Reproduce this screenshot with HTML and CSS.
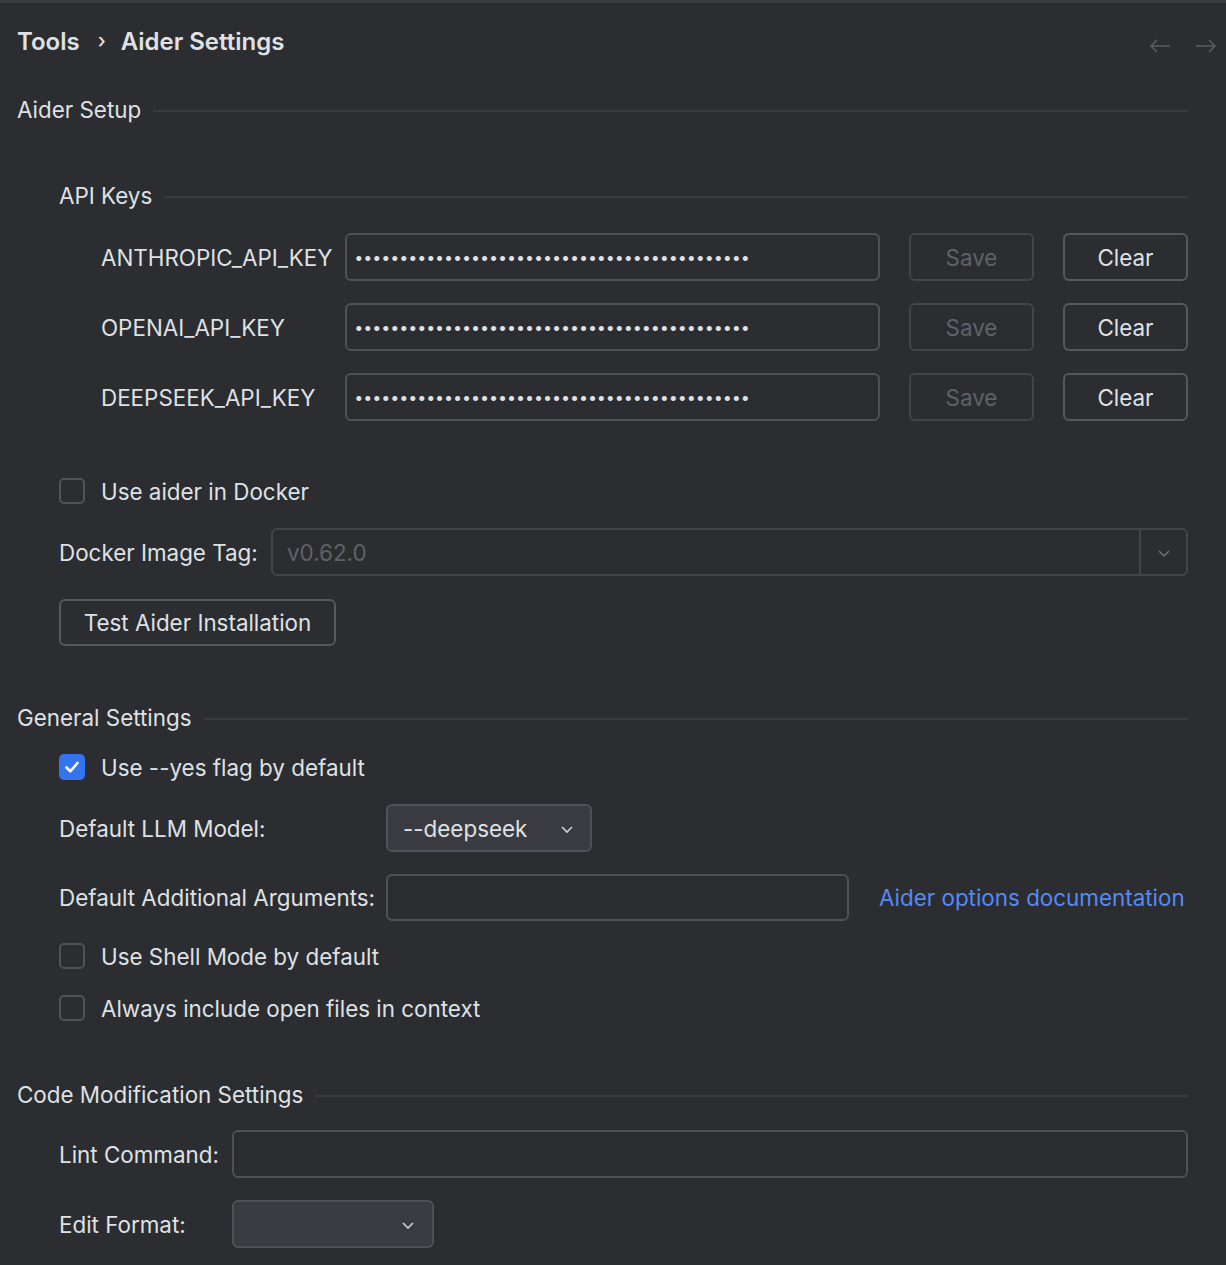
FILE: index.html
```html
<!DOCTYPE html>
<html>
<head>
<meta charset="utf-8">
<link rel="stylesheet" href="styles.css">
</head>
<body>
<div class="page">
  <div class="header">
    <div class="crumbs"><span>Tools</span><span class="sep">›</span><span>Aider Settings</span></div>
    <div class="nav">
      <svg width="24" height="16" viewBox="0 0 24 16"><path d="M22 8H3M9 2L3 8l6 6" fill="none" stroke="#595c62" stroke-width="1.6"/></svg>
      <svg width="24" height="16" viewBox="0 0 24 16"><path d="M2 8h19M15 2l6 6-6 6" fill="none" stroke="#595c62" stroke-width="1.6"/></svg>
    </div>
  </div>

  <div class="title t-setup"><span>Aider Setup</span><i class="rule"></i></div>

  <div class="indent">
    <div class="title t-keys"><span>API Keys</span><i class="rule"></i></div>

    <div class="keys">
      <div class="keyrow">
        <label class="keylabel">ANTHROPIC_API_KEY</label>
        <div class="field pw">••••••••••••••••••••••••••••••••••••••••••••</div>
        <button class="btn disabled">Save</button>
        <button class="btn">Clear</button>
      </div>
      <div class="keyrow">
        <label class="keylabel">OPENAI_API_KEY</label>
        <div class="field pw">••••••••••••••••••••••••••••••••••••••••••••</div>
        <button class="btn disabled">Save</button>
        <button class="btn">Clear</button>
      </div>
      <div class="keyrow">
        <label class="keylabel">DEEPSEEK_API_KEY</label>
        <div class="field pw">••••••••••••••••••••••••••••••••••••••••••••</div>
        <button class="btn disabled">Save</button>
        <button class="btn">Clear</button>
      </div>
    </div>

    <div class="check m-docker"><span class="box"></span><span>Use aider in Docker</span></div>

    <div class="row m-tag">
      <label class="lbl-tag">Docker Image Tag:</label>
      <div class="combo-disabled">
        <span class="ph">v0.62.0</span>
        <span class="arrowbox"><svg width="14" height="10" viewBox="0 0 14 10"><path d="M2 3l5 5 5-5" fill="none" stroke="#6f737a" stroke-width="1.5"/></svg></span>
      </div>
    </div>

    <button class="btn test">Test Aider Installation</button>
  </div>

  <div class="title t-general"><span>General Settings</span><i class="rule"></i></div>

  <div class="indent">
    <div class="check m-yes"><span class="box checked"><svg width="20" height="20" viewBox="0 0 20 20"><path d="M4.5 10.5l3.8 3.8L15.5 6" fill="none" stroke="#fff" stroke-width="2.6" stroke-linecap="round" stroke-linejoin="round"/></svg></span><span>Use --yes flag by default</span></div>

    <div class="row m-llm">
      <label class="lbl-wide">Default LLM Model:</label>
      <div class="combo llm"><span>--deepseek</span><svg width="14" height="10" viewBox="0 0 14 10"><path d="M2 3l5 5 5-5" fill="none" stroke="#ced0d6" stroke-width="1.6"/></svg></div>
    </div>

    <div class="row m-args">
      <label class="lbl-wide">Default Additional Arguments:</label>
      <div class="field args"></div>
      <a class="link">Aider options documentation</a>
    </div>

    <div class="check m-shell"><span class="box"></span><span>Use Shell Mode by default</span></div>
    <div class="check m-always"><span class="box"></span><span>Always include open files in context</span></div>
  </div>

  <div class="title t-code"><span>Code Modification Settings</span><i class="rule"></i></div>

  <div class="indent">
    <div class="row m-lint">
      <label class="lbl-lint">Lint Command:</label>
      <div class="field lint"></div>
    </div>
    <div class="row m-edit">
      <label class="lbl-lint">Edit Format:</label>
      <div class="combo edit"><span></span><svg width="14" height="10" viewBox="0 0 14 10"><path d="M2 3l5 5 5-5" fill="none" stroke="#ced0d6" stroke-width="1.6"/></svg></div>
    </div>
  </div>
</div>
</body>
</html>
```

FILE: styles.css
```css
html, body {
  margin: 0;
  padding: 0;
  background: #2b2d30;
}
body {
  font-family: Inter, "Noto Sans", sans-serif;
  font-size: 22.4px;
  color: #dfe1e5;
  width: 1226px;
  height: 1265px;
  overflow: hidden;
}
.page {
  border-top: 3px solid #3b3d41;
  padding: 0 38px 0 17px;
}
.header {
  height: 76px;
  display: flex;
  align-items: center;
  justify-content: space-between;
  margin-right: -30px;
}
.crumbs {
  display: flex;
  align-items: center;
  font-size: 24px;
  font-weight: 600;
  color: #dfe1e5;
}
.crumbs .sep {
  font-weight: 500;
  margin: 0 15px 0 18px;
  font-size: 20px;
}
.nav {
  display: flex;
  gap: 22px;
  padding-top: 10px;
}
.title {
  height: 30px;
  display: flex;
  align-items: center;
}
.title .rule {
  flex: 1;
  height: 0;
  border-top: 2px solid #393b40;
  margin-left: 12px;
  margin-top: 3px;
}
.t-setup { margin-top: 15px; }
.t-keys { margin-top: 56px; }
.t-general { margin-top: 56px; }
.t-code { margin-top: 56px; }
.indent { padding-left: 42px; }

.keys {
  margin-top: 23px;
  padding-left: 42px;
  display: flex;
  flex-direction: column;
  gap: 22px;
}
.keyrow {
  display: flex;
  align-items: center;
  height: 48px;
}
.keylabel { width: 244px; }
.field {
  box-sizing: border-box;
  height: 48px;
  border: 2px solid #4e5157;
  border-radius: 6px;
  background: #2b2d30;
}
.pw {
  width: 535px;
  padding-left: 8px;
  display: flex;
  align-items: center;
  font-size: 16px;
  font-weight: 700;
  letter-spacing: 1.4px;
  color: #dfe1e5;
  overflow: hidden;
  white-space: nowrap;
}
.btn {
  box-sizing: border-box;
  height: 48px;
  width: 125px;
  margin-left: 29px;
  border: 2px solid #55585e;
  border-radius: 6px;
  background: #2b2d30;
  color: #dfe1e5;
  font-family: Inter, "Noto Sans", sans-serif;
  font-size: 22.4px;
  padding: 0;
}
.btn.disabled {
  border-color: #43454a;
  color: #5f6268;
}
.check {
  height: 30px;
  display: flex;
  align-items: center;
  gap: 16px;
}
.box {
  box-sizing: border-box;
  width: 26px;
  height: 26px;
  border: 2px solid #50535a;
  border-radius: 5px;
  display: flex;
  align-items: center;
  justify-content: center;
}
.box.checked {
  background: #3574f0;
  border-color: #3574f0;
}
.m-docker { margin-top: 55px; }
.m-yes { margin-top: 20px; }
.m-shell { margin-top: 20px; }
.m-always { margin-top: 22px; }

.row {
  display: flex;
  align-items: center;
  height: 48px;
}
.m-tag { margin-top: 22px; }
.m-llm { margin-top: 22px; }
.m-args { margin-top: 22px; height: 47px; }
.m-lint { margin-top: 21px; }
.m-edit { margin-top: 22px; }

.lbl-tag { width: 212px; }
.combo-disabled {
  flex: 1;
  box-sizing: border-box;
  height: 48px;
  border: 2px solid #43454a;
  border-radius: 6px;
  display: flex;
  align-items: center;
}
.combo-disabled .ph {
  flex: 1;
  color: #5f6268;
  padding-left: 14px;
}
.arrowbox {
  width: 47px;
  height: 100%;
  border-left: 2px solid #43454a;
  display: flex;
  align-items: center;
  justify-content: center;
  padding-top: 2px;
  box-sizing: border-box;
}
.test {
  margin: 23px 0 0 0;
  width: 277px;
  height: 47px;
  display: block;
}
.lbl-wide { width: 327px; }
.combo {
  box-sizing: border-box;
  height: 48px;
  border: 2px solid #4e5157;
  border-radius: 6px;
  background: #393b40;
  display: flex;
  align-items: center;
  justify-content: space-between;
  padding: 0 16px 0 15px;
}
.combo svg { margin-top: 2px; }
.llm { width: 206px; }
.edit { width: 202px; padding-right: 17px; }
.args { width: 463px; height: 47px; }
.link {
  margin-left: 30px;
  color: #548af7;
}
.lbl-lint { width: 173px; }
.lint { flex: 1; }
```
